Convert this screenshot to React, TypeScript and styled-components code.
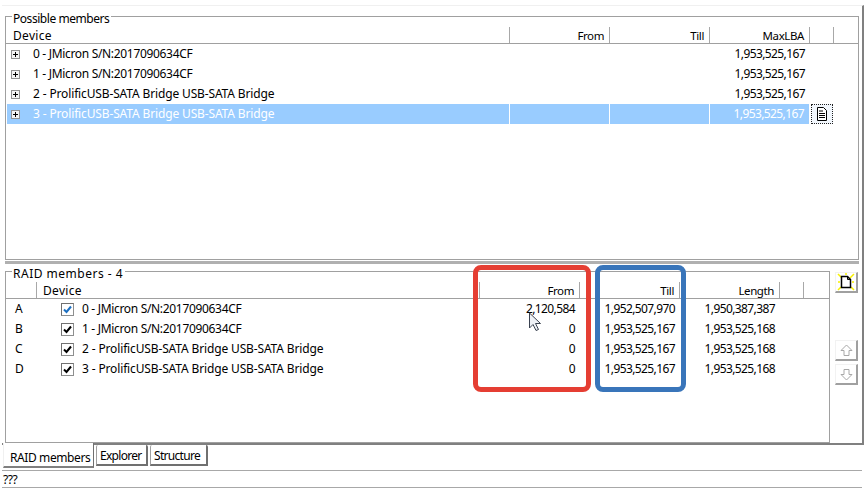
import React from "react";
import styled, { createGlobalStyle } from "styled-components";

const Global = createGlobalStyle`
  html, body { margin: 0; padding: 0; background: #fff; }
  body { font-family: "Noto Sans", "Open Sans", "Liberation Sans", sans-serif; font-size: 12px; color: #000; }
`;

const Page = styled.div`
  position: relative;
  width: 864px;
  height: 489px;
  overflow: hidden;
  display: flex;
  flex-direction: column;
  padding-top: 5px;
  box-sizing: border-box;
`;

const Panel = styled.div`
  margin-left: 2px;
  height: 440px;
  box-sizing: border-box;
  border-top: 1px solid #f0f0f0;
  border-right: 2px solid #808080;
  border-bottom: 2px solid #808080;
  padding: 10px 3px 0 3px;
  display: flex;
  flex-direction: column;
`;

const Group = styled.section<{ $width: number; $height: number }>`
  position: relative;
  box-sizing: border-box;
  width: ${(p) => p.$width}px;
  height: ${(p) => p.$height}px;
  border: 1px solid #a0a0a0;
  padding-top: 10px;
  flex: none;
`;

const Legend = styled.div<{ $ls: number }>`
  position: absolute;
  left: 6px;
  top: -6px;
  background: #fff;
  padding: 0 2px 0 1px;
  line-height: 15px;
  height: 15px;
  white-space: nowrap;
  letter-spacing: ${(p) => p.$ls}px;
`;

const Splitter = styled.div`
  height: 3px;
  margin: 1px 0 7px 0;
  background: #b0b0b0;
  flex: none;
`;

const Lower = styled.div`
  display: flex;
  align-items: flex-start;
`;

const Row = styled.div<{ $cols: string; $selected?: boolean }>`
  display: grid;
  grid-template-columns: ${(p) => p.$cols};
  height: 20px;
  margin-left: 1px;
  line-height: 20px;
  white-space: nowrap;
  color: ${(p) => (p.$selected ? "#fff" : "#000")};
`;

const HeadRow = styled(Row)`
  height: 16px;
  line-height: 18px;
  border-bottom: 1px solid #a0a0a0;
  box-sizing: content-box;
  margin-left: 0;
  padding-left: 1px;
`;

const Head = styled.div<{ $right?: boolean }>`
  box-sizing: border-box;
  border-right: 1px solid #a8a8a8;
  padding: 0 5px 0 6px;
  text-align: ${(p) => (p.$right ? "right" : "left")};
  overflow: hidden;
  font-size: ${(p) => (p.$right ? 11.5 : 12)}px;
  letter-spacing: ${(p) => (p.$right ? "-0.4px" : "0.3px")};
`;

const Cell = styled.div<{ $selected?: boolean }>`
  box-sizing: border-box;
  padding: 0 5px 0 0;
  text-align: right;
  letter-spacing: -0.6px;
  background: ${(p) => (p.$selected ? "#99ccff" : "transparent")};
  border-right: ${(p) => (p.$selected ? "1px solid #fff" : "0")};
`;

const Name = styled.span<{ $ls: number }>`
  letter-spacing: ${(p) => p.$ls}px;
`;

const TreeCell = styled(Cell)`
  display: flex;
  align-items: center;
  text-align: left;
  padding-left: 4px;
`;

const Expander = styled.span`
  display: inline-block;
  position: relative;
  box-sizing: border-box;
  width: 9px;
  height: 9px;
  border: 1px solid #919191;
  background: #f4f4f4;
  margin-right: 13px;
  &::before {
    content: "";
    position: absolute;
    left: 1px;
    top: 3px;
    width: 5px;
    height: 1px;
    background: #000;
  }
  &::after {
    content: "";
    position: absolute;
    left: 3px;
    top: 1px;
    width: 1px;
    height: 5px;
    background: #000;
  }
`;

const DocCell = styled.div`
  box-sizing: border-box;
  margin: 0 1px 0 1px;
  border: 1px dotted #222;
  display: flex;
  align-items: center;
  justify-content: center;
  background: #f2f7fd;
`;

const Letter = styled.div`
  padding-left: 8px;
`;

const DeviceCell = styled.div`
  display: flex;
  align-items: center;
  padding-left: 24px;
`;

const Check = styled.span`
  box-sizing: border-box;
  width: 13px;
  height: 13px;
  border: 1px solid #8e8f8f;
  border-top-color: #707070;
  border-left-color: #707070;
  background: #fff;
  margin-right: 8px;
  display: flex;
  align-items: center;
  justify-content: center;
  flex: none;
`;

const Side = styled.div`
  display: flex;
  flex-direction: column;
  padding: 1px 0 0 5px;
`;

const ToolButton = styled.div<{ $mt?: number }>`
  box-sizing: border-box;
  width: 23px;
  height: 21px;
  margin-top: ${(p) => p.$mt ?? 0}px;
  border: 1px solid #f2f2f2;
  border-right: 2px solid #a0a0a0;
  border-bottom: 2px solid #a0a0a0;
  display: flex;
  align-items: center;
  justify-content: center;
`;

const Tabs = styled.div`
  display: flex;
  align-items: flex-start;
  margin-left: 3px;
  height: 25px;
  flex: none;
`;

const ActiveTab = styled.div`
  box-sizing: border-box;
  width: 91px;
  height: 25px;
  margin-top: -2px;
  background: #fff;
  line-height: 26px;
  padding: 2px 0 0 6px;
  white-space: nowrap;
  letter-spacing: -0.4px;
  border-left: 1px solid #f0f0f0;
  border-right: 1px solid #707070;
  border-bottom: 2px solid #808080;
`;

const Tab = styled.div<{ $width: number }>`
  box-sizing: border-box;
  width: ${(p) => p.$width}px;
  height: 21px;
  line-height: 18px;
  margin-left: 2px;
  padding: 2px 0 0 3px;
  white-space: nowrap;
  letter-spacing: -0.7px;
  border-left: 1px solid #a0a0a0;
  border-right: 2px solid #707070;
  border-bottom: 2px solid #707070;
  border-radius: 2px 2px 0 0;
`;

const Status = styled.div`
  margin: 0 2px;
  height: 18px;
  line-height: 17px;
  box-sizing: border-box;
  border-top: 1px solid #a8a8a8;
  border-bottom: 1px solid #a8a8a8;
  padding-left: 1px;
  letter-spacing: -0.5px;
  flex: none;
`;

const Mark = styled.div<{ $left: number; $width: number; $color: string }>`
  position: absolute;
  box-sizing: border-box;
  left: ${(p) => p.$left}px;
  top: 265px;
  width: ${(p) => p.$width}px;
  height: 127px;
  border: 5px solid ${(p) => p.$color};
  border-radius: 8px;
  pointer-events: none;
`;

const Pointer = styled.svg`
  position: absolute;
  left: 528px;
  top: 312px;
`;

const DocIcon = () => (
  <svg width="12" height="14" viewBox="0 0 12 14">
    <path d="M1.500.5h6l3 3v10h-9z" fill="#fff" stroke="#000" />
    <path d="M3 4h4M3 6.500h6M3 8.500h6M3 10.500h6" stroke="#000" />
  </svg>
);

const NewIcon = () => (
  <svg width="18" height="18" viewBox="0 0 18 18">
    <path d="M1 1l4 4M17 1l-4 4M1 17l3-3M17 17l-3-3M1 9h2M15 9h2M9 0v2" stroke="#f7f000" strokeWidth="1.500" />
    <path d="M4.500 3.500h6l3 3v8h-9z" fill="#fff" stroke="#000" strokeWidth="1.500" />
    <path d="M10.500 3.500v3h3" fill="none" stroke="#000" />
  </svg>
);

const ArrowIcon = ({ down }: { down?: boolean }) => (
  <svg width="13" height="13" viewBox="0 0 13 13" style={down ? { transform: "scaleY(-1)" } : undefined}>
    <path d="M6.500 1L12 6.500H9v5H4v-5H1z" fill="#fff" stroke="#a8a8a8" />
  </svg>
);

const CheckMark = ({ color }: { color: string }) => (
  <svg width="9" height="9" viewBox="0 0 9 9">
    <path d="M1 4.500l2.500 2.500L8 1.500" fill="none" stroke={color} strokeWidth="2" />
  </svg>
);

const topCols = "503px 100px 100px 100px 24px";
const lowCols = "30px 443px 100px 100px 100px 24px";

const possible = [
  { d: "0 - JMicron S/N:2017090634CF", ls: -0.32 },
  { d: "1 - JMicron S/N:2017090634CF", ls: -0.32 },
  { d: "2 - ProlificUSB-SATA Bridge USB-SATA Bridge", ls: -0.14 },
  { d: "3 - ProlificUSB-SATA Bridge USB-SATA Bridge", ls: -0.14 },
];

const raid = [
  { l: "A", f: "2,120,584", t: "1,952,507,970", n: "1,950,387,387", c: "#1c6fc0" },
  { l: "B", f: "0", t: "1,953,525,167", n: "1,953,525,168", c: "#000" },
  { l: "C", f: "0", t: "1,953,525,167", n: "1,953,525,168", c: "#000" },
  { l: "D", f: "0", t: "1,953,525,167", n: "1,953,525,168", c: "#000" },
];

export default function App() {
  return (
    <Page>
      <Global />
      <Panel>
        <Group $width={854} $height={244}>
          <Legend $ls={-0.45}>Possible members</Legend>
          <HeadRow $cols={topCols}>
            <Head>Device</Head>
            <Head $right>From</Head>
            <Head $right>Till</Head>
            <Head $right>MaxLBA</Head>
            <Head />
          </HeadRow>
          {possible.map((p, i) => {
            const sel = i === 3;
            return (
              <Row key={p.d} $cols={topCols} $selected={sel}>
                <TreeCell $selected={sel}>
                  <Expander />
                  <Name $ls={p.ls}>{p.d}</Name>
                </TreeCell>
                <Cell $selected={sel} />
                <Cell $selected={sel} />
                <Cell $selected={sel}>1,953,525,167</Cell>
                {sel ? (
                  <DocCell>
                    <DocIcon />
                  </DocCell>
                ) : (
                  <div />
                )}
              </Row>
            );
          })}
        </Group>
        <Splitter />
        <Lower>
          <Group $width={825} $height={172}>
            <Legend $ls={0.5}>RAID members - 4</Legend>
            <HeadRow $cols={lowCols}>
              <Head />
              <Head>Device</Head>
              <Head $right>From</Head>
              <Head $right>Till</Head>
              <Head $right>Length</Head>
              <Head />
            </HeadRow>
            {raid.map((r, i) => (
              <Row key={r.l} $cols={lowCols}>
                <Letter>{r.l}</Letter>
                <DeviceCell>
                  <Check>
                    <CheckMark color={r.c} />
                  </Check>
                  <Name $ls={possible[i].ls}>{possible[i].d}</Name>
                </DeviceCell>
                <Cell>{r.f}</Cell>
                <Cell>{r.t}</Cell>
                <Cell>{r.n}</Cell>
                <div />
              </Row>
            ))}
          </Group>
          <Side>
            <ToolButton>
              <NewIcon />
            </ToolButton>
            <ToolButton $mt={47}>
              <ArrowIcon />
            </ToolButton>
            <ToolButton $mt={3}>
              <ArrowIcon down />
            </ToolButton>
          </Side>
        </Lower>
      </Panel>
      <Tabs>
        <ActiveTab>RAID members</ActiveTab>
        <Tab $width={52}>Explorer</Tab>
        <Tab $width={58}>Structure</Tab>
      </Tabs>
      <Status>???</Status>
      <Mark $left={473} $width={118} $color="#e53e33" />
      <Mark $left={595} $width={91} $color="#3975ba" />
      <Pointer width="14" height="20" viewBox="0 0 14 20">
        <path d="M1.500 1v15l3.500-3.500 3 6 2.500-1-3-6h5z" fill="#eef1f6" stroke="#3a4250" />
      </Pointer>
    </Page>
  );
}
